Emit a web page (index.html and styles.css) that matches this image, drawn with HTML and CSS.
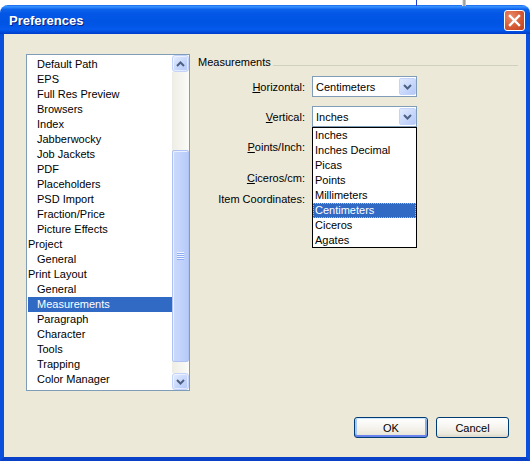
FILE: index.html
```html
<!DOCTYPE html>
<html>
<head>
<meta charset="utf-8">
<title>Preferences</title>
<link rel="stylesheet" href="styles.css">
</head>
<body>
<div class="desk-line"></div>
<div class="desk-gray"></div>
<div class="window">
  <div class="titlebar">
    <span class="title">Preferences</span>
    <div class="close">
      <svg width="19" height="19" viewBox="0 0 19 19"><path d="M5 5 L14 14 M14 5 L5 14" stroke="#fff" stroke-width="2.4" stroke-linecap="square" fill="none"/></svg>
    </div>
  </div>
  <div class="client">
    <div class="main">
      <div class="listbox">
        <ul class="items">
          <li class="sub">Default Path</li>
          <li class="sub">EPS</li>
          <li class="sub">Full Res Preview</li>
          <li class="sub">Browsers</li>
          <li class="sub">Index</li>
          <li class="sub">Jabberwocky</li>
          <li class="sub">Job Jackets</li>
          <li class="sub">PDF</li>
          <li class="sub">Placeholders</li>
          <li class="sub">PSD Import</li>
          <li class="sub">Fraction/Price</li>
          <li class="sub">Picture Effects</li>
          <li>Project</li>
          <li class="sub">General</li>
          <li>Print Layout</li>
          <li class="sub">General</li>
          <li class="sub sel">Measurements</li>
          <li class="sub">Paragraph</li>
          <li class="sub">Character</li>
          <li class="sub">Tools</li>
          <li class="sub">Trapping</li>
          <li class="sub">Color Manager</li>
        </ul>
        <div class="vscroll">
          <div class="sb-btn"><svg width="9" height="6" viewBox="0 0 9 6"><path d="M1 5 L4.5 1.5 L8 5" stroke="#4d6185" stroke-width="2" fill="none"/></svg></div>
          <div class="sb-track">
            <div class="sb-thumb" style="margin-top:78px;height:212px"><div class="grip"></div></div>
          </div>
          <div class="sb-btn"><svg width="9" height="6" viewBox="0 0 9 6"><path d="M1 1 L4.5 4.5 L8 1" stroke="#4d6185" stroke-width="2" fill="none"/></svg></div>
        </div>
      </div>
      <div class="panel">
        <div class="group-head"><span>Measurements</span><span class="group-line"></span></div>
        <div class="row r1">
          <label><u>H</u>orizontal:</label>
          <div class="select"><span class="val">Centimeters</span><span class="dd-btn"><svg width="9" height="6" viewBox="0 0 9 6"><path d="M1 1 L4.5 4.5 L8 1" stroke="#4d6185" stroke-width="2" fill="none"/></svg></span></div>
        </div>
        <div class="row r2">
          <label><u>V</u>ertical:</label>
          <div class="select"><span class="val">Inches</span><span class="dd-btn"><svg width="9" height="6" viewBox="0 0 9 6"><path d="M1 1 L4.5 4.5 L8 1" stroke="#4d6185" stroke-width="2" fill="none"/></svg></span>
            <ul class="dropdown">
              <li>Inches</li>
              <li>Inches Decimal</li>
              <li>Picas</li>
              <li>Points</li>
              <li>Millimeters</li>
              <li class="sel">Centimeters</li>
              <li>Ciceros</li>
              <li>Agates</li>
            </ul>
          </div>
        </div>
        <div class="row r3"><label><u>P</u>oints/Inch:</label></div>
        <div class="row r4"><label><u>C</u>iceros/cm:</label></div>
        <div class="row r5"><label>Item Coordinates:</label></div>
      </div>
    </div>
    <div class="footer">
      <button class="btn ok">OK</button>
      <button class="btn cancel">Cancel</button>
    </div>
  </div>
</div>
</body>
</html>
```
FILE: styles.css
```css
html, body {
  margin: 0;
  padding: 0;
}
body {
  width: 532px;
  height: 462px;
  background: #fff;
  position: relative;
  overflow: hidden;
  font-family: "Liberation Sans", Arial, sans-serif;
  font-size: 11px;
  color: #000;
  padding-top: 5px;
  box-sizing: border-box;
}
.desk-line {
  position: absolute;
  left: 416px;
  top: 0;
  width: 1px;
  height: 6px;
  background: #1f3fd8;
}
.desk-gray {
  position: absolute;
  left: 462px;
  top: 0;
  width: 4px;
  height: 6px;
  background: linear-gradient(to right, #fff, #8e8e8e, #d6d6d6);
}
.window {
  width: 530px;
}
.titlebar {
  height: 29px;
  box-sizing: border-box;
  border-radius: 8px 8px 0 0;
  background: linear-gradient(to bottom, #0a5ae6 0%, #3d93ff 4%, #2b86fb 8%, #0c62ea 15%, #0457e6 30%, #0054e3 60%, #0559ec 85%, #0049da 94%, #003bc8 100%);
  display: flex;
  align-items: center;
  justify-content: space-between;
  padding: 0 5px 0 9px;
}
.title {
  color: #fff;
  font-weight: bold;
  font-size: 13px;
  text-shadow: 1px 1px #0b1f80;
  margin-top: 2px;
}
.close {
  width: 21px;
  height: 21px;
  box-sizing: border-box;
  border: 1px solid #fff;
  border-radius: 3px;
  background: radial-gradient(circle at 30% 30%, #ea8a6a, #d55a35 55%, #c0401c);
  display: flex;
  align-items: center;
  justify-content: center;
  margin-top: 2px;
}
.close svg {
  display: block;
}
.client {
  height: 427px;
  box-sizing: border-box;
  background: #ece9d8;
  border-left: 4px solid #0a50dd;
  border-right: 4px solid #0a50dd;
  border-bottom: 4px solid #0840c8;
  display: flex;
  flex-direction: column;
}
.main {
  display: flex;
  align-items: flex-start;
  padding: 20px 8px 0 22px;
}
.listbox {
  width: 164px;
  height: 337px;
  box-sizing: border-box;
  border: 1px solid #7f9db9;
  background: #fff;
  display: flex;
}
.items {
  list-style: none;
  margin: 0;
  padding: 2px 0 0 1px;
  flex: 1;
  overflow: hidden;
}
.items li {
  height: 15px;
  line-height: 15px;
  white-space: nowrap;
}
.items li.sub {
  padding-left: 9px;
}
.items li.sel {
  background: #316ac5;
  color: #fff;
}
.vscroll {
  width: 17px;
  display: flex;
  flex-direction: column;
}
.sb-btn {
  height: 17px;
  box-sizing: border-box;
  border: 1px solid #c3d3fb;
  border-radius: 3px;
  background: linear-gradient(135deg, #e4ecfe, #c4d5fb 60%, #b4c8f6);
  box-shadow: inset 0 0 0 1px rgba(255, 255, 255, 0.55);
  display: flex;
  align-items: center;
  justify-content: center;
}
.sb-btn svg {
  display: block;
}
.sb-track {
  flex: 1;
  background: linear-gradient(to right, #eeede5, #fbfbf8);
  display: flex;
  flex-direction: column;
}
.sb-thumb {
  box-sizing: border-box;
  border: 1px solid #aec3f3;
  border-radius: 2px;
  background: linear-gradient(to right, #cbd9fc, #c2d3fb 50%, #b6caf8);
  box-shadow: inset 1px 1px #eaf0ff;
  display: flex;
  align-items: center;
  justify-content: center;
}
.grip {
  width: 7px;
  height: 8px;
  background: repeating-linear-gradient(to bottom, #eef3fe 0 1px, #8cadf4 1px 2px);
}
.panel {
  margin-left: 8px;
  flex: 1;
}
.group-head {
  display: flex;
  padding-top: 1px;
  height: 14px;
  line-height: 14px;
}
.group-line {
  flex: 1;
  height: 0;
  margin: 10px 0 0 2px;
  border-top: 1px solid #d0d0bf;
}
.row {
  display: flex;
  align-items: center;
  height: 21px;
}
.row label {
  width: 107px;
  text-align: right;
  margin-right: 7px;
  white-space: nowrap;
}
.r1 { margin-top: 7px; }
.r2 { margin-top: 9px; }
.r3 { margin-top: 9px; }
.r4 { margin-top: 10px; }
.r5 { margin-top: 0; }
.select {
  position: relative;
  width: 105px;
  height: 21px;
  box-sizing: border-box;
  border: 1px solid #7f9db9;
  background: #fff;
  display: flex;
  align-items: center;
  padding: 1px 0 1px 1px;
}
.select .val {
  flex: 1;
  padding-left: 2px;
}
.dd-btn {
  width: 17px;
  height: 17px;
  box-sizing: border-box;
  border: 1px solid #c3d3fb;
  border-radius: 2px;
  background: linear-gradient(135deg, #e2eafe, #c6d6fb 60%, #b4c8f6);
  display: flex;
  align-items: center;
  justify-content: center;
}
.dd-btn svg {
  display: block;
}
.dropdown {
  position: absolute;
  top: 20px;
  left: -1px;
  width: 105px;
  height: 121px;
  box-sizing: border-box;
  border: 1px solid #000;
  background: #fff;
  list-style: none;
  margin: 0;
  padding: 0;
}
.dropdown li {
  height: 15px;
  line-height: 15px;
  padding-left: 2px;
  white-space: nowrap;
}
.dropdown li.sel {
  background: #316ac5;
  color: #fff;
  outline: 1px dotted #e2b46a;
  outline-offset: -1px;
}
.footer {
  margin-top: auto;
  display: flex;
  justify-content: flex-end;
  gap: 8px;
  padding: 0 17px 19px 0;
}
.btn {
  height: 21px;
  box-sizing: border-box;
  border: 1px solid #003c74;
  border-radius: 3px;
  background: linear-gradient(to bottom, #ffffff, #f6f5f0 45%, #ebe8dc 85%, #d8d2c4);
  font-family: "Liberation Sans", Arial, sans-serif;
  font-size: 11px;
  color: #000;
  padding: 0;
  margin: 0;
}
.btn.ok {
  width: 74px;
  box-shadow: inset 0 1px #cee7ff, inset 0 -2px #6982ee, inset 2px 0 #aac6f5, inset -2px 0 #89ade4;
}
.btn.cancel {
  width: 73px;
  box-shadow: inset 0 -2px #e2ddcf;
}
```
